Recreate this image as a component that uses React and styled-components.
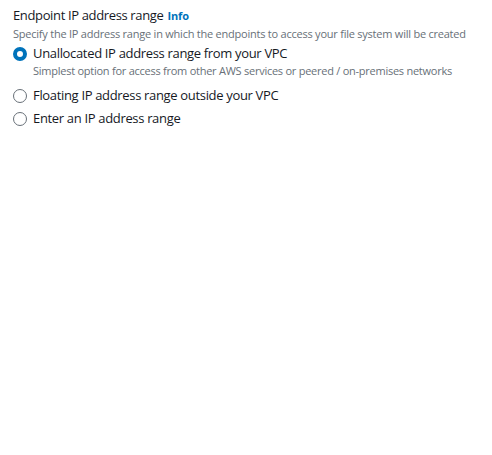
import React from "react";
import styled, { createGlobalStyle } from "styled-components";

const Global = createGlobalStyle`
  html, body { margin: 0; padding: 0; background: #fff; }
  body { font-family: "Open Sans", "Noto Sans", sans-serif; color: #16191f; }
`;

const Field = styled.div`
  padding: 6px 13px;
  display: flex;
  flex-direction: column;
`;

const Label = styled.div`
  font-size: 13px;
  line-height: 18px;
  letter-spacing: -0.36px;
  color: #16191f;
  display: flex;
  align-items: baseline;
  gap: 4px;
`;

const Info = styled.a`
  font-size: 11px;
  font-weight: 700;
  letter-spacing: -0.1px;
  color: #0073bb;
  text-decoration: none;
`;

const Description = styled.div`
  font-size: 11px;
  line-height: 16px;
  letter-spacing: -0.23px;
  color: #687078;
  margin-top: 1px;
`;

const Options = styled.div`
  display: flex;
  flex-direction: column;
  margin-top: 2px;
  gap: 4px;
`;

const Option = styled.label`
  display: grid;
  grid-template-columns: 14px 1fr;
  column-gap: 6px;
  align-items: start;
`;

const Circle = styled.span`
  box-sizing: border-box;
  width: 14px;
  height: 14px;
  border-radius: 50%;
  margin-top: 3px;
  border: ${(p) => (p.$checked ? "4.5px solid #0073bb" : "1px solid #687078")};
  background: #fff;
`;

const OptionText = styled.div`
  display: flex;
  flex-direction: column;
`;

const OptionLabel = styled.span`
  font-size: 13px;
  line-height: 19px;
  letter-spacing: -0.33px;
  color: #16191f;
`;

const OptionDesc = styled.span`
  font-size: 11px;
  line-height: 15px;
  letter-spacing: -0.25px;
  color: #687078;
  padding-bottom: 4px;
`;

const options = [
  {
    label: "Unallocated IP address range from your VPC",
    desc: "Simplest option for access from other AWS services or peered / on-premises networks",
    checked: true,
  },
  { label: "Floating IP address range outside your VPC" },
  { label: "Enter an IP address range" },
];

export default function App() {
  return (
    <>
      <Global />
      <Field>
        <Label>
          Endpoint IP address range <Info href="#">Info</Info>
        </Label>
        <Description>
          Specify the IP address range in which the endpoints to access your file system will be created
        </Description>
        <Options>
          {options.map((o) => (
            <Option key={o.label}>
              <Circle $checked={o.checked} />
              <OptionText>
                <OptionLabel>{o.label}</OptionLabel>
                {o.desc && <OptionDesc>{o.desc}</OptionDesc>}
              </OptionText>
            </Option>
          ))}
        </Options>
      </Field>
    </>
  );
}
